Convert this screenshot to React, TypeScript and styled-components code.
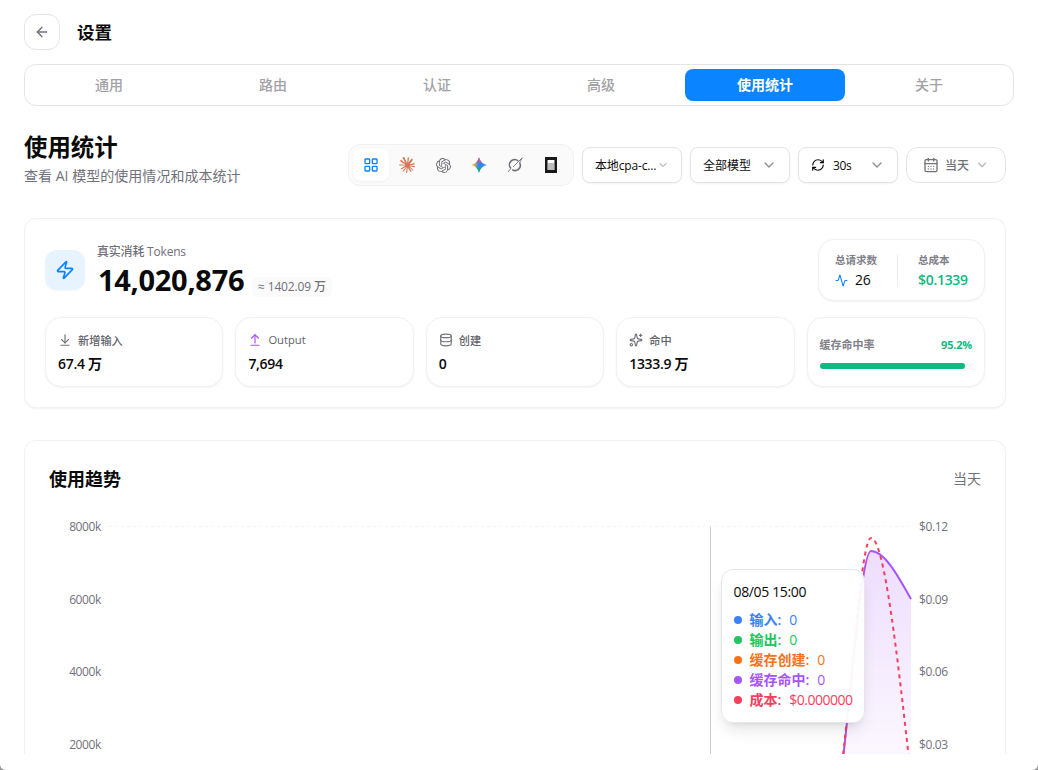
import React from "react";
import styled, { createGlobalStyle } from "styled-components";
import {
  ArrowLeft, LayoutGrid, ChevronDown, RefreshCw, CalendarDays, Zap, Activity,
  ArrowDownToLine, ArrowUpFromLine, Database, Sparkles,
} from "lucide-react";
import { SiOpenai, SiClaude } from "react-icons/si";

const Global = createGlobalStyle`
  * { box-sizing: border-box; }
  body { margin: 0; background: #fff; color: #0a0a0b; font-family: "Open Sans", "Noto Sans CJK SC", sans-serif; overflow: hidden; }
  button { font-family: inherit; background: #fff; padding: 0; margin: 0; }
  h1, h2, h3, p { margin: 0; }
`;

const Page = styled.div`
  position: relative; height: 770px; width: 1038px; display: flex; flex-direction: column; padding: 14px 24px 16px; overflow: hidden; background: #fff;
`;
const WindowCorner = styled.svg<{ $side: "left" | "right" }>`
  position: absolute; bottom: 0; ${p => p.$side}: 0; ${p => (p.$side === "left" ? "transform: scaleX(-1);" : "")}
`;
const Header = styled.header`display: flex; align-items: center; gap: 17px; height: 36px; flex: none;`;
const BackButton = styled.button`
  width: 36px; height: 36px; border: 1px solid #e4e4e7; border-radius: 12px; display: grid; place-items: center; color: #71717a;
`;
const PageTitle = styled.h1`font-size: 17.5px; line-height: 28px; font-weight: 600;`;
const Tabs = styled.nav`
  margin-top: 14px; height: 42px; flex: none; border: 1px solid #e4e4e7; border-radius: 12px; padding: 4px;
  display: grid; grid-template-columns: repeat(6, 1fr); gap: 4px;
`;
const Tab = styled.button<{ $active?: boolean }>`
  border: 0; border-radius: 8px; font-size: 14px; line-height: 20px; font-weight: ${p => (p.$active ? 700 : 500)};
  color: ${p => (p.$active ? "#fff" : "#a1a1a6")}; background: ${p => (p.$active ? "#0a84ff" : "transparent")};
`;
const Scroll = styled.main`flex: 1; min-height: 0; overflow: hidden; width: 982px; display: flex; flex-direction: column;`;
const Toolbar = styled.div`display: flex; align-items: center; margin-top: 24px; height: 70px; flex: none; gap: 8px;`;
const Heading = styled.div`flex: 1; height: 70px;`;
const Title = styled.h2`font-size: 23.4px; line-height: 32px; font-weight: 600; margin-top: 1px;`;
const Subtitle = styled.p`font-size: 14px; line-height: 20px; color: #71717a; margin-top: 3px; letter-spacing: 0.03px; white-space: nowrap;`;
const Providers = styled.div`
  width: 226px; height: 42px; border: 1px solid #f1f1f2; border-radius: 12px; background: #fafafa; padding: 4px; display: flex;
`;
const Provider = styled.button<{ $active?: boolean }>`
  width: 36px; height: 32px; border: 0; border-radius: 8px; display: grid; place-items: center; color: ${p => (p.$active ? "#0a84ff" : "#71717a")};
  background: ${p => (p.$active ? "#fff" : "transparent")}; box-shadow: ${p => (p.$active ? "0 1px 2px rgba(0,0,0,.04)" : "none")};
`;
const Select = styled.button<{ $soft?: boolean; $pad?: number }>`
  width: 100px; height: 36px; border: 1px solid #e4e4e7; border-radius: ${p => (p.$soft ? 12 : 8)}px; padding: 0 ${p => p.$pad ?? 12}px;
  display: flex; align-items: center; font-size: 12px; color: ${p => (p.$soft ? "#71717a" : "#0a0a0b")}; white-space: nowrap;
  font-weight: ${p => (p.$soft ? 500 : 400)}; box-shadow: ${p => (p.$soft ? "none" : "0 1px 2px rgba(0,0,0,.05)")};
  & > svg:last-child { margin-left: auto; color: ${p => (p.$soft ? "#b4b4b9" : "#8e8e93")}; flex: none; }
`;
const SelectLabel = styled.span<{ $gap?: number; $tight?: number }>`margin-left: ${p => p.$gap ?? 0}px; letter-spacing: ${p => p.$tight ?? 0}px;`;

const Card = styled.section`
  flex: none; border: 1px solid #f1f1f2; border-radius: 12px; background: #fff; box-shadow: 0 1px 2px rgba(0,0,0,.05);
`;
const Summary = styled(Card)`margin-top: 18px; height: 190px; padding: 20px; display: flex; flex-direction: column; gap: 16px;`;
const SummaryTop = styled.div`display: flex; align-items: center; height: 62px;`;
const ZapTile = styled.div`
  width: 40px; height: 40px; border-radius: 12px; background: #e7f3ff; color: #0a84ff; display: grid; place-items: center;
  box-shadow: 0 1px 2px rgba(0,0,0,.04);
`;
const Total = styled.div`margin-left: 12px; flex: 1; height: 58px;`;
const TotalLabel = styled.p`font-size: 12px; line-height: 16px; margin-top: 3px; font-weight: 500; color: #71717a; letter-spacing: -0.2px;`;
const TotalRow = styled.div`display: flex; align-items: flex-end; height: 38px;`;
const TotalValue = styled.strong`font-size: 29px; line-height: 36px; font-weight: 700; letter-spacing: -0.3px; padding-left: 1px; width: 155px;`;
const Approx = styled.span`
  font-size: 12px; line-height: 20px; font-weight: 500; color: #71717a; background: #fafafa; border-radius: 6px; padding: 0 5px 0 6px;
  letter-spacing: -0.15px; width: 80px; white-space: nowrap; margin-bottom: 1px;
`;
const CostBox = styled(Card)`width: 167px; height: 62px; border-radius: 16px; display: flex; align-items: center; padding: 2px 0 0 16px;`;
const CostItem = styled.div`flex: none; width: 62px; white-space: nowrap;`;
const Divider = styled.div`flex: none; width: 1px; height: 32px; background: #ececee; margin-right: 20px;`;
const TinyLabel = styled.p`font-size: 10.5px; line-height: 16px; font-weight: 600; color: #808088;`;
const CostValue = styled.p<{ $green?: boolean }>`
  display: flex; align-items: center; gap: 7px; font-size: 14px; line-height: 20px; font-weight: ${p => (p.$green ? 600 : 500)};
  color: ${p => (p.$green ? "#10b981" : "#0a0a0b")}; letter-spacing: -0.3px; margin-top: 2px;
  svg { color: #0a84ff; }
`;
const Metrics = styled.div`display: grid; grid-template-columns: repeat(5, 1fr); gap: 12px; height: 70px;`;
const Metric = styled(Card)`border-radius: 16px; padding: 12px;`;
const MetricHead = styled.div<{ $color?: string }>`
  display: flex; align-items: center; gap: 6px; height: 19px; font-size: 11.2px; color: #62626a; font-weight: 500;
  svg { color: ${p => p.$color ?? "#71717a"}; }
`;
const MetricValue = styled.p`font-size: 14px; line-height: 20px; margin-top: 5px; font-weight: 600; letter-spacing: -0.3px;`;
const RateHead = styled.div`display: flex; justify-content: space-between; font-size: 11px; line-height: 16px; margin-top: 7px; font-weight: 600; color: #808088;`;
const Rate = styled.span`color: #10b981; font-weight: 700; letter-spacing: -0.2px;`;
const Track = styled.div`height: 6px; border-radius: 3px; background: #f7f7f8; margin-top: 10px;`;
const Fill = styled.div`height: 6px; width: 95.2%; border-radius: 3px; background: #10b981;`;

const Trend = styled(Card)`margin-top: 32px; height: 460px; padding: 24px;`;
const TrendHead = styled.div`display: flex; justify-content: space-between; align-items: center; height: 28px;`;
const TrendTitle = styled.h3`font-size: 18px; font-weight: 600; line-height: 28px;`;
const Period = styled.span`font-size: 14px; line-height: 20px; color: #71717a; padding-bottom: 1px;`;
const ChartArea = styled.div`position: relative; width: 932px; height: 330px; margin-top: 24px;`;
const Chart = styled.svg`display: block; overflow: visible; font-size: 12px; font-family: "Open Sans", sans-serif;`;
const Tooltip = styled.div`
  position: absolute; left: 671.5px; top: 52px; width: 144px; height: 154px; background: rgba(255,255,255,.95); border: 1px solid #e7e7e9;
  border-radius: 12px; padding: 12px; font-size: 14px; line-height: 20px; box-shadow: 0 10px 15px -3px rgba(0,0,0,.1), 0 4px 6px -4px rgba(0,0,0,.1);
`;
const TooltipTitle = styled.p`font-weight: 500; margin-bottom: 8px; letter-spacing: -0.35px;`;
const TooltipRow = styled.div<{ $color: string }>`display: flex; align-items: center; gap: 8px; color: ${p => p.$color}; white-space: nowrap; height: 20px;`;
const Dot = styled.i`flex: none; width: 8px; height: 8px; border-radius: 50%; background: currentColor;`;
const Name = styled.span`font-weight: 600;`;
const Value = styled.span`letter-spacing: -0.5px;`;

const GeminiMark = () => (
  <svg width="16" height="16" viewBox="0 0 16 16">
    <defs>
      <linearGradient id="gemBase" x1="0" y1="0" x2="1" y2="0">
        <stop offset="0" stopColor="#f4b93a" /><stop offset=".22" stopColor="#e0b040" /><stop offset=".45" stopColor="#3186ff" /><stop offset="1" stopColor="#3186ff" />
      </linearGradient>
      <linearGradient id="gemTop" x1="0" y1="0" x2="0" y2="1">
        <stop offset="0" stopColor="#ef4e5e" /><stop offset=".25" stopColor="#e2556a" stopOpacity=".7" /><stop offset=".42" stopColor="#e2556a" stopOpacity="0" />
      </linearGradient>
      <linearGradient id="gemBottom" x1="0" y1="1" x2="0" y2="0">
        <stop offset="0" stopColor="#08b962" /><stop offset=".25" stopColor="#08b962" stopOpacity=".7" /><stop offset=".42" stopColor="#08b962" stopOpacity="0" />
      </linearGradient>
    </defs>
    {["gemBase", "gemTop", "gemBottom"].map(id => (
      <path key={id} fill={`url(#${id})`} d="M8 .2C9 4.4 11.6 7 15.8 8C11.6 9 9 11.6 8 15.8C7 11.6 4.4 9 .2 8C4.4 7 7 4.4 8 .2Z" />
    ))}
  </svg>
);
const GrokMark = () => (
  <svg width="16" height="16" viewBox="0 0 16 16" fill="none" stroke="#71717a" strokeWidth="1.6">
    <path d="M3.9 11.4A5.2 5.2 0 0 1 11.2 4M12.6 5.7A5.2 5.2 0 0 1 5.2 12.6" />
    <path d="M1 15L3.9 11.4M6 10L15.2.8L12.6 5.7" strokeWidth=".9" />
  </svg>
);
const TerminalMark = () => (
  <svg width="12" height="16" viewBox="0 0 12 16">
    <path d="M0 0H12V16H0Z" fill="#18181b" /><path d="M2.5 3H9.5V13H2.5Z" fill="#e6e6e6" />
    <path d="M3 3H9V6H3Z" fill="#fff" /><path d="M3 6H9V13H3Z" fill="#bdbdbd" />
  </svg>
);
const Corner = ({ side }: { side: "left" | "right" }) => (
  <WindowCorner $side={side} width="6" height="6" viewBox="0 0 6 6">
    <path d="M6 0C6 3.5 4 5.6 0 6H6Z" fill="#999" />
  </WindowCorner>
);

const tabs = ["通用", "路由", "认证", "高级", "使用统计", "关于"];
const metrics = [
  { icon: ArrowDownToLine, name: "新增输入", value: "67.4 万" },
  { icon: ArrowUpFromLine, name: "Output", value: "7,694", color: "#a855f7" },
  { icon: Database, name: "创建", value: "0" },
  { icon: Sparkles, name: "命中", value: "1333.9 万" },
];
const ticks = [["8000k", "$0.12"], ["6000k", "$0.09"], ["4000k", "$0.06"], ["2000k", "$0.03"]];
const series = [
  ["输入", "0", "#3b82f6"], ["输出", "0", "#22c55e"], ["缓存创建", "0", "#f97316"], ["缓存命中", "0", "#a855f7"], ["成本", "$0.000000", "#f43f5e"],
];

export default function App() {
  return (
    <Page>
      <Global />
      <Header>
        <BackButton aria-label="返回"><ArrowLeft size={16} /></BackButton>
        <PageTitle>设置</PageTitle>
      </Header>
      <Tabs>{tabs.map(t => <Tab key={t} $active={t === "使用统计"}>{t}</Tab>)}</Tabs>
      <Scroll>
        <Toolbar>
          <Heading>
            <Title>使用统计</Title>
            <Subtitle>查看 AI 模型的使用情况和成本统计</Subtitle>
          </Heading>
          <Providers>
            <Provider $active><LayoutGrid size={16} /></Provider>
            <Provider><SiClaude size={16} color="#d97757" /></Provider>
            <Provider><SiOpenai size={15} /></Provider>
            <Provider><GeminiMark /></Provider>
            <Provider><GrokMark /></Provider>
            <Provider><TerminalMark /></Provider>
          </Providers>
          <Select><SelectLabel $tight={-0.15}>本地cpa-c...</SelectLabel><ChevronDown size={12} /></Select>
          <Select><SelectLabel>全部模型</SelectLabel><ChevronDown size={16} /></Select>
          <Select><RefreshCw size={14} /><SelectLabel $gap={8} $tight={-0.3}>30s</SelectLabel><ChevronDown size={16} /></Select>
          <Select $soft $pad={16}><CalendarDays size={16} /><SelectLabel $gap={6}>当天</SelectLabel><ChevronDown size={14} /></Select>
        </Toolbar>
        <Summary>
          <SummaryTop>
            <ZapTile><Zap size={20} /></ZapTile>
            <Total>
              <TotalLabel>真实消耗 Tokens</TotalLabel>
              <TotalRow><TotalValue>14,020,876</TotalValue><Approx>≈ 1402.09 万</Approx></TotalRow>
            </Total>
            <CostBox>
              <CostItem><TinyLabel>总请求数</TinyLabel><CostValue><Activity size={13} />26</CostValue></CostItem>
              <Divider />
              <CostItem><TinyLabel>总成本</TinyLabel><CostValue $green>$0.1339</CostValue></CostItem>
            </CostBox>
          </SummaryTop>
          <Metrics>
            {metrics.map(({ icon: Icon, name, value, color }) => (
              <Metric key={name}>
                <MetricHead $color={color}><Icon size={14} />{name}</MetricHead>
                <MetricValue>{value}</MetricValue>
              </Metric>
            ))}
            <Metric>
              <RateHead><span>缓存命中率</span><Rate>95.2%</Rate></RateHead>
              <Track><Fill /></Track>
            </Metric>
          </Metrics>
        </Summary>
        <Trend>
          <TrendHead><TrendTitle>使用趋势</TrendTitle><Period>当天</Period></TrendHead>
          <ChartArea>
            <Chart width="932" height="330" viewBox="49 517 932 330">
              <defs>
                <linearGradient id="hits" x1="0" y1="551" x2="0" y2="816.5" gradientUnits="userSpaceOnUse">
                  <stop offset="0" stopColor="#a855f7" stopOpacity=".2" /><stop offset="1" stopColor="#a855f7" stopOpacity="0" />
                </linearGradient>
              </defs>
              <path d="M109 526.5H911" stroke="#f4f4f5" strokeDasharray="3 3" />
              {ticks.map(([left, right], i) => (
                <g key={left} fill="#71717a" letterSpacing="-0.38">
                  <text x="101" y={531 + i * 72.6} textAnchor="end">{left}</text>
                  <text x="919" y={531 + i * 72.6}>{right}</text>
                </g>
              ))}
              <path d="M710.5 527V817" stroke="#ccc" />
              <path d="M831 816.5C844.3 816.5 857.6 551 871 551C884.3 551 897.6 575 911 599V816.5Z" fill="url(#hits)" />
              <path d="M831 816.5C844.3 816.5 857.6 551 871 551C884.3 551 897.6 575 911 599" fill="none" stroke="#a855f7" strokeWidth="2" />
              <path d="M831 816.5C844.3 816.5 857.6 538 871 538C884.3 538 897.6 657 911 777" fill="none" stroke="#f43f5e" strokeWidth="2" strokeDasharray="4 4" />
            </Chart>
            <Tooltip>
              <TooltipTitle>08/05 15:00</TooltipTitle>
              {series.map(([name, value, color]) => (
                <TooltipRow key={name} $color={color}><Dot /><Name>{name}:</Name><Value>{value}</Value></TooltipRow>
              ))}
            </Tooltip>
          </ChartArea>
        </Trend>
      </Scroll>
      <Corner side="left" />
      <Corner side="right" />
    </Page>
  );
}
